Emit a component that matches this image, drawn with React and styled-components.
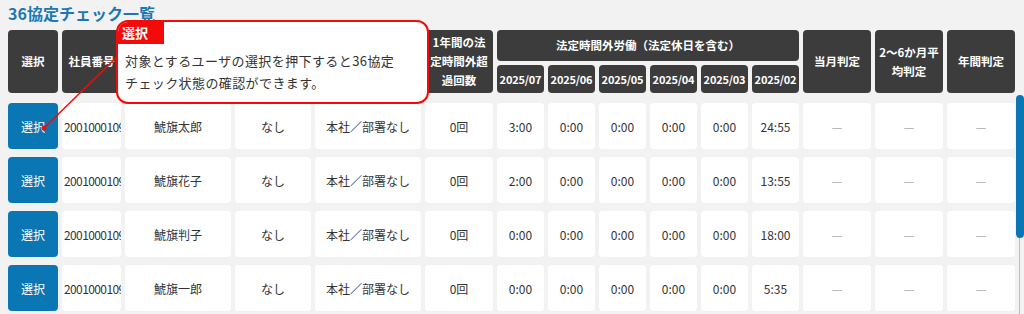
import React from "react";
import styled, { createGlobalStyle } from "styled-components";

const GlobalStyle = createGlobalStyle`
  html, body {
    margin: 0;
    padding: 0;
    background: #f2f2f2;
    font-family: "Noto Sans CJK JP", "Noto Sans", sans-serif;
    color: #333;
  }
`;

const COLS = "50px 59px 106px 76px 106px 68px repeat(6, 47px) repeat(3, 68px)";

const Page = styled.div`
  position: relative;
  width: 1024px;
  height: 314px;
  overflow: hidden;
  padding: 0 0 0 8px;
  box-sizing: border-box;
`;

const Title = styled.h1`
  margin: 0;
  height: 30px;
  padding-top: 1px;
  box-sizing: border-box;
  font-size: 16px;
  line-height: 24px;
  font-weight: 700;
  color: #1b78b5;
`;

const HeadGrid = styled.div`
  display: grid;
  grid-template-columns: ${COLS};
  grid-template-rows: 31px 28px;
  gap: 4px;
  width: 1008px;
`;

const HeadCell = styled.div`
  background: #3c3c3c;
  color: #fff;
  border-radius: 4px;
  font-size: ${(p) => (p.$small ? "11px" : "11.5px")};
  letter-spacing: ${(p) => (p.$small ? "-0.2px" : "0")};
  font-weight: 700;
  line-height: 19px;
  display: flex;
  align-items: center;
  justify-content: center;
  text-align: center;
  white-space: nowrap;
  grid-row: ${(p) => p.$row || "1 / span 2"};
  grid-column: ${(p) => p.$col || "auto"};
`;

const Body = styled.div`
  display: flex;
  margin-top: 2px;
  height: 219px;
`;

const Rows = styled.div`
  display: flex;
  flex-direction: column;
  gap: 8px;
  padding-top: 8px;
  width: 1008px;
`;

const Row = styled.div`
  display: grid;
  grid-template-columns: ${COLS};
  gap: 4px;
  height: 46px;
  flex-shrink: 0;
`;

const Cell = styled.div`
  background: #fff;
  border-radius: 4px;
  font-size: 12px;
  display: flex;
  align-items: center;
  justify-content: ${(p) => (p.$left ? "flex-start" : "center")};
  padding: ${(p) => (p.$left ? "0 0 0 2px" : "0")};
  letter-spacing: ${(p) => (p.$left ? "-0.6px" : "0")};
  overflow: hidden;
  white-space: nowrap;
  color: ${(p) => (p.$muted ? "#aaa" : "#333")};
`;

const SelectButton = styled.button`
  border: 0;
  background: #0a77b4;
  color: #fff;
  border-radius: 4px;
  font-family: inherit;
  font-size: 12px;
  padding: 0;
  cursor: pointer;
`;

const Scrollbar = styled.div`
  position: relative;
  width: 8px;
  flex-shrink: 0;
  &::before {
    content: "";
    position: absolute;
    left: 3px;
    top: 0;
    bottom: 0;
    width: 1px;
    background: #bdbdbd;
  }
`;

const Thumb = styled.div`
  position: relative;
  width: 8px;
  height: 143px;
  background: #0a77b4;
  border-radius: 4px;
`;

const Callout = styled.div`
  position: absolute;
  left: 116px;
  top: 20px;
  width: 313px;
  height: 84px;
  box-sizing: border-box;
  border: 2px solid #f50a0a;
  border-radius: 12px;
  background: #fff;
  overflow: hidden;
`;

const CalloutLabel = styled.div`
  width: 46px;
  height: 22px;
  background: #f50a0a;
  color: #fff;
  font-size: 13px;
  font-weight: 700;
  line-height: 22px;
  padding-left: 4px;
  box-sizing: border-box;
`;

const CalloutText = styled.p`
  margin: 6px 0 0 7px;
  font-size: 13px;
  line-height: 22px;
  letter-spacing: 0.4px;
  color: #333;
`;

const Pointer = styled.svg`
  position: absolute;
  left: 0;
  top: 0;
  pointer-events: none;
`;

const months = ["2025/07", "2025/06", "2025/05", "2025/04", "2025/03", "2025/02"];

const data = [
  { name: "鯱旗太郎", times: ["3:00", "0:00", "0:00", "0:00", "0:00", "24:55"] },
  { name: "鯱旗花子", times: ["2:00", "0:00", "0:00", "0:00", "0:00", "13:55"] },
  { name: "鯱旗判子", times: ["0:00", "0:00", "0:00", "0:00", "0:00", "18:00"] },
  { name: "鯱旗一郎", times: ["0:00", "0:00", "0:00", "0:00", "0:00", "5:35"] },
];

export default function App() {
  return (
    <Page>
      <GlobalStyle />
      <Title>36協定チェック一覧</Title>
      <HeadGrid>
        <HeadCell>選択</HeadCell>
        <HeadCell>社員番号</HeadCell>
        <HeadCell>氏名</HeadCell>
        <HeadCell>休職</HeadCell>
        <HeadCell>所属</HeadCell>
        <HeadCell>
          1年間の法
          <br />
          定時間外超
          <br />
          過回数
        </HeadCell>
        <HeadCell $row="1" $col="7 / span 6">
          法定時間外労働（法定休日を含む）
        </HeadCell>
        <HeadCell $row="1 / span 2" $col="13">当月判定</HeadCell>
        <HeadCell $row="1 / span 2" $col="14">
          2〜6か月平
          <br />
          均判定
        </HeadCell>
        <HeadCell $row="1 / span 2" $col="15">年間判定</HeadCell>
        {months.map((m, i) => (
          <HeadCell key={m} $small $row="2" $col={`${7 + i}`}>
            {m}
          </HeadCell>
        ))}
      </HeadGrid>
      <Body>
        <Rows>
          {data.map((r) => (
            <Row key={r.name}>
              <SelectButton>選択</SelectButton>
              <Cell $left>2001000109</Cell>
              <Cell>{r.name}</Cell>
              <Cell>なし</Cell>
              <Cell>本社／部署なし</Cell>
              <Cell>0回</Cell>
              {r.times.map((t, i) => (
                <Cell key={i}>{t}</Cell>
              ))}
              <Cell $muted>—</Cell>
              <Cell $muted>—</Cell>
              <Cell $muted>—</Cell>
            </Row>
          ))}
        </Rows>
        <Scrollbar>
          <Thumb />
        </Scrollbar>
      </Body>
      <Pointer width="1024" height="314">
        <line x1="120" y1="54" x2="44" y2="128" stroke="#f50a0a" strokeWidth="1.5" />
        <circle cx="44" cy="128" r="2.5" fill="#f50a0a" />
      </Pointer>
      <Callout>
        <CalloutLabel>選択</CalloutLabel>
        <CalloutText>
          対象とするユーザの選択を押下すると36協定
          <br />
          チェック状態の確認ができます。
        </CalloutText>
      </Callout>
    </Page>
  );
}
